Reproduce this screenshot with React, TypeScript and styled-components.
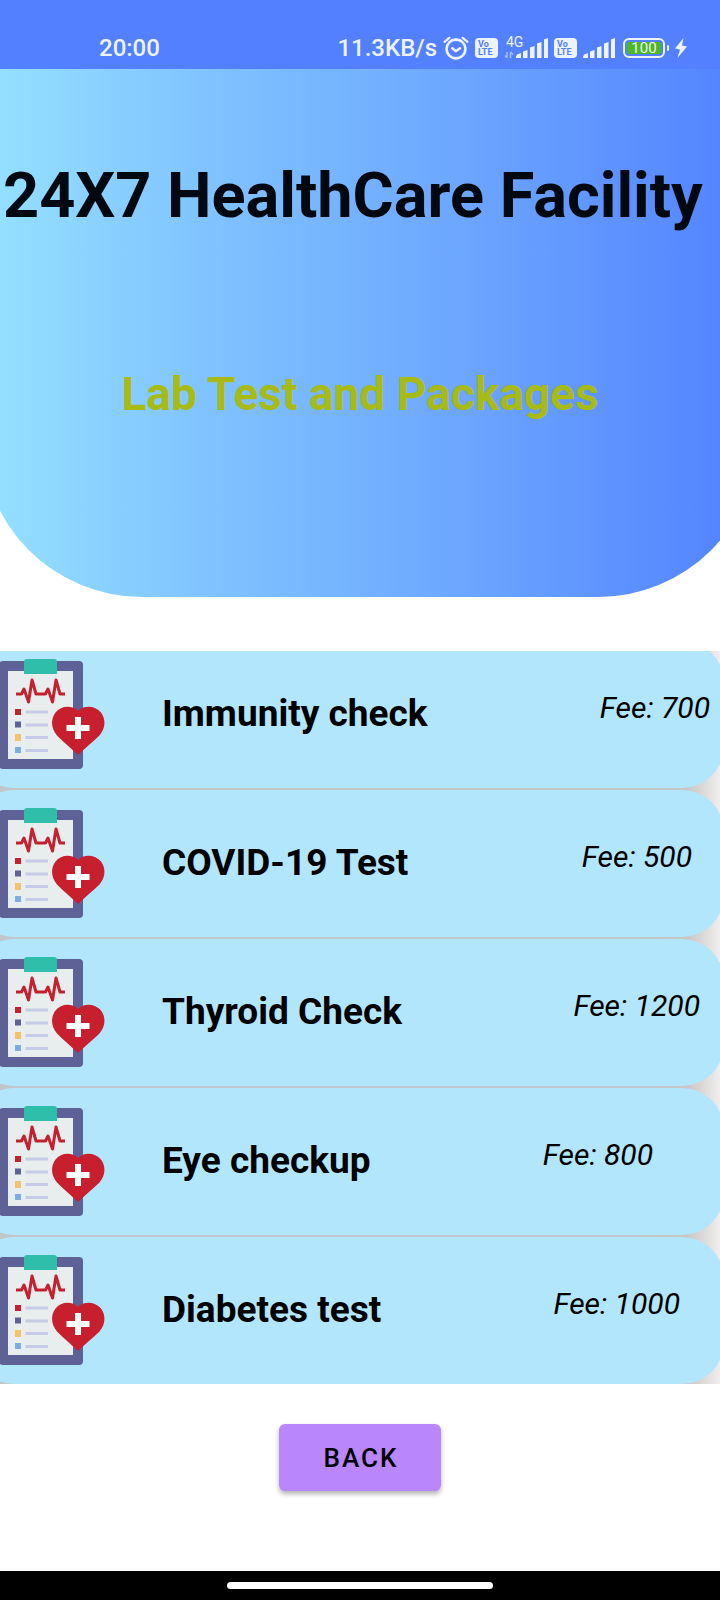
import React from "react";
import styled, { createGlobalStyle } from "styled-components";

const GlobalStyle = createGlobalStyle`
  *, *::before, *::after { box-sizing: border-box; }
  body {
    margin: 0;
    background: #ffffff;
    color: #000000;
    font-family: Roboto, "Liberation Sans", sans-serif;
  }
`;

const Page = styled.div`
  display: flex;
  flex-direction: column;
  min-height: 100vh;
  overflow-x: hidden;
`;

const StatusBar = styled.header`
  display: flex;
  align-items: center;
  justify-content: space-between;
  height: 69px;
  padding: 26px 33px 0 99px;
  background: #5280ff;
  color: #edf3ff;
  font-size: 24px;
  font-weight: 500;
  line-height: 28px;
`;

const StatusIcons = styled.div`
  display: flex;
  align-items: center;
  gap: 6px;
`;

const VolteBadge = styled.span`
  display: flex;
  flex-direction: column;
  justify-content: center;
  width: 23px;
  height: 20px;
  padding: 0 3px;
  border-radius: 4px;
  background: #edf3ff;
  color: #5280ff;
  font-size: 9px;
  font-weight: 700;
  line-height: 8px;
`;

const Battery = styled.span`
  display: flex;
  align-items: center;
  gap: 2px;
  margin-left: 2px;

  &::after {
    content: "";
    width: 2px;
    height: 6px;
    border-radius: 1px;
    background: #edf3ff;
  }
`;

const BatteryBody = styled.span`
  display: flex;
  width: 42px;
  height: 20px;
  padding: 2px;
  border: 2px solid #edf3ff;
  border-radius: 6px;
`;

const BatteryCharge = styled.span`
  flex: 1;
  border-radius: 2px;
  background: #4cb823;
  font-size: 15px;
  font-weight: 400;
  line-height: 13px;
  text-align: center;
`;

const Hero = styled.section`
  position: relative;
  display: flex;
  flex-direction: column;
  align-items: center;
  height: 528px;
  padding-top: 90px;
  overflow: hidden;
  isolation: isolate;

  &::before {
    content: "";
    position: absolute;
    z-index: -1;
    inset: 0 -38px 0 -18px;
    border-radius: 0 0 160px 160px;
    background: linear-gradient(
      90deg,
      #94dfff 18px,
      #80c4ff 28%,
      #6ca6ff 62%,
      #5485ff calc(100% - 38px)
    );
  }
`;

const Title = styled.h1`
  align-self: flex-start;
  margin: 0;
  padding-left: 3px;
  color: #020810;
  font-size: 63px;
  font-weight: 700;
  line-height: 74px;
  white-space: nowrap;
`;

const Subtitle = styled.h2`
  margin: 134px 0 0;
  color: #a8bb14;
  font-size: 46px;
  font-weight: 700;
  line-height: 54px;
  white-space: nowrap;
`;

const TestViewport = styled.div`
  margin-top: 54px;
  overflow: hidden;
`;

const TestList = styled.ul`
  display: flex;
  flex-direction: column;
  gap: 2px;
  margin: -10px -4px 0 -28px;
  padding: 0;
  list-style: none;
  background: linear-gradient(90deg, #c0c6c9 90%, #c9c5c5 95%, #f4f2f2);
`;

const TestCard = styled.li`
  display: flex;
  align-items: center;
  height: 147px;
  padding: 0 0 2px 28px;
  border-radius: 42px;
  background: #b2e6fc;
`;

const TestName = styled.h3`
  flex: 1;
  margin: 0 0 0 56px;
  font-size: 37px;
  font-weight: 700;
  line-height: 42px;
`;

const Fee = styled.p<{ $inset: number }>`
  margin: 0;
  padding: 0 ${({ $inset }) => $inset}px 12px 0;
  font-size: 30px;
  font-style: italic;
  line-height: 34px;
`;

const BackButton = styled.button`
  align-self: center;
  width: 162px;
  height: 67px;
  margin: 40px 0;
  padding: 0 0 0 2px;
  border: 0;
  border-radius: 6px;
  background: #b986fc;
  box-shadow: 0 3px 5px rgba(0, 0, 0, 0.3);
  color: #000000;
  font: 500 26px/30px Roboto, sans-serif;
  letter-spacing: 2px;
  text-transform: uppercase;
`;

const NavigationBar = styled.footer`
  display: flex;
  align-items: center;
  justify-content: center;
  height: 29px;
  margin-top: auto;
  background: #000000;
`;

const HomeIndicator = styled.span`
  width: 37%;
  height: 7px;
  border-radius: 4px;
  background: #ffffff;
`;

const AlarmIcon = () => (
  <svg width="26" height="24" viewBox="0 0 26 24" fill="none" stroke="#edf3ff" strokeWidth="2.6" strokeLinecap="round" aria-hidden="true">
    <circle cx="13" cy="13" r="9.4" />
    <path d="M9.3 12.3 12.8 15.2 17 12.3" />
    <path d="M1.5 5.8 6.3 1.8M24.5 5.8 19.7 1.8" strokeWidth="2.2" />
  </svg>
);

const bars = (x: number, top: number) => (
  <path
    fill="#edf3ff"
    transform={`translate(${x} ${top})`}
    d="M0 18.5 1.2 16.6 5 15V20H0ZM7 13.6 11.500 12V20H7ZM14 9.6 18.500 8V20H14ZM21 5.6 25.500 4V20H21ZM28 1.6 32 0V20H28Z"
  />
);

const SignalIcon = () => (
  <svg width="32" height="20" viewBox="0 0 32 20" aria-hidden="true">
    {bars(0, 0)}
  </svg>
);

const MobileDataIcon = () => (
  <svg width="44" height="34" viewBox="0 -5 44 34" aria-label="4G">
    <text x="2" y="11" fill="#edf3ff" fontFamily="Roboto" fontSize="14" fontWeight="400">4G</text>
    <path d="M3 16v5.5M1 19.5l2 2.2M6.5 22v-6M6.5 16l2.5 2.5" fill="none" stroke="#a6bfff" strokeWidth="1.5" />
    {bars(12, 2)}
  </svg>
);

const ChargingIcon = () => (
  <svg width="12" height="20" viewBox="0 0 12 20" aria-hidden="true">
    <path d="M8.5 0 0 10.5 5 11.5 2.5 20 12 8.5 7 7.5Z" fill="#edf3ff" />
  </svg>
);

const LabReportIcon = () => (
  <svg width="106" height="112" viewBox="0 18 106 112" aria-hidden="true">
    <rect x="-1" y="21" width="84" height="108" rx="4" fill="#5d6196" />
    <rect x="8" y="31" width="65" height="88" fill="#e8eded" />
    <path d="M24 34V22q0-3 3-3h27q3 0 3 3v12Z" fill="#2fbeaa" />
    <path d="M16 54h5.5l2.500-5 4.500 13 3.500-22 4 14h9.500l2.500-5 4.500 13 3.500-22 4 14H65" fill="none" stroke="#c5202f" strokeWidth="3" strokeLinejoin="round" />
    <rect x="15" y="69" width="6" height="6" fill="#c5202f" />
    <rect x="15" y="81.5" width="6" height="6" fill="#5d6196" />
    <rect x="15" y="94" width="6" height="7" fill="#f6c169" />
    <rect x="15" y="107" width="6" height="6" fill="#79aee6" />
    <path d="M25.5 72H48M25.5 85H48M25.5 97.5H48M25.5 110.5H48" stroke="#c6cbea" strokeWidth="3" />
    <path d="M78 71C72 65 61 65.5 55.5 72.5C50 80 51.5 89 57 95.5C63 102 71 108 78 115C85 108 93 102 99.5 95.5C105 89 106.5 80 101 72.5C95 65.5 84 65 78 71Z" fill="#c71f2d" />
    <path d="M75 77h6v8h8.5v6H81v8h-6v-8h-8.5v-6H75Z" fill="#ffffff" />
  </svg>
);

const tests = [
  { name: "Immunity check", fee: 700, inset: 14 },
  { name: "COVID-19 Test", fee: 500, inset: 32 },
  { name: "Thyroid Check", fee: 1200, inset: 24 },
  { name: "Eye checkup", fee: 800, inset: 71 },
  { name: "Diabetes test", fee: 1000, inset: 44 },
];

export default function App() {
  return (
    <Page>
      <GlobalStyle />
      <StatusBar>
        <time>20:00</time>
        <StatusIcons>
          <span>11.3KB/s</span>
          <AlarmIcon />
          <VolteBadge><span>Vo</span><span>LTE</span></VolteBadge>
          <MobileDataIcon />
          <VolteBadge><span>Vo</span><span>LTE</span></VolteBadge>
          <SignalIcon />
          <Battery>
            <BatteryBody><BatteryCharge>100</BatteryCharge></BatteryBody>
          </Battery>
          <ChargingIcon />
        </StatusIcons>
      </StatusBar>
      <Hero>
        <Title>24X7 HealthCare Facility</Title>
        <Subtitle>Lab Test and Packages</Subtitle>
      </Hero>
      <TestViewport>
        <TestList>
          {tests.map(({ name, fee, inset }) => (
            <TestCard key={name}>
              <LabReportIcon />
              <TestName>{name}</TestName>
              <Fee $inset={inset}>Fee: {fee}</Fee>
            </TestCard>
          ))}
        </TestList>
      </TestViewport>
      <BackButton type="button">Back</BackButton>
      <NavigationBar>
        <HomeIndicator />
      </NavigationBar>
    </Page>
  );
}
